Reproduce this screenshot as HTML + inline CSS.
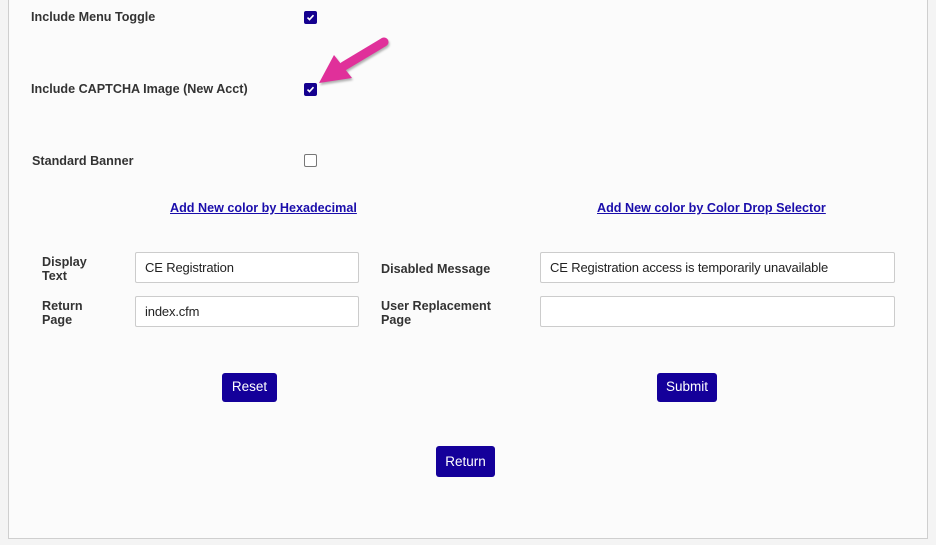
<html><head><style>
body{margin:0;width:936px;height:545px;background:#f4f4f4;font-family:"Liberation Sans",Arial,sans-serif;position:relative;overflow:hidden}
.box{position:absolute;left:8px;top:-2px;width:918px;height:539px;background:#fbfbfb;border:1px solid #cfcfcf}
.a{position:absolute;font-size:12.6px;font-weight:bold;color:#333;line-height:14px}
.cb{position:absolute;width:11px;height:11px;border-radius:2px;background:#14008f;border:1px solid #14008f}
.cb svg{position:absolute;left:1px;top:1px}
.cbo{position:absolute;width:11px;height:11px;border-radius:2px;background:#fff;border:1px solid #777}
.in{position:absolute;height:28px;border:1px solid #ccc;border-radius:2px;background:#fff;box-sizing:border-box;font-size:13px;letter-spacing:-0.15px;color:#222;padding:7px 9px}
.lk{position:absolute;font-size:12.6px;font-weight:bold;color:#1a0dab;text-decoration:underline}
.bt{position:absolute;height:29px;background:#14009a;color:#fff;border-radius:3px;font-size:13.5px;text-align:center;line-height:28px}
</style></head><body>
<div class="box"></div>
<div class="a" style="left:31px;top:10px">Include Menu Toggle</div>
<div class="cb" style="left:304px;top:11px"><svg width="9" height="9" viewBox="0 0 9 9"><path d="M1.5 4.6 L3.5 6.6 L7.5 2.2" stroke="#fff" stroke-width="1.6" fill="none"/></svg></div>
<div class="a" style="left:31px;top:82px">Include CAPTCHA Image (New Acct)</div>
<div class="cb" style="left:304px;top:83px"><svg width="9" height="9" viewBox="0 0 9 9"><path d="M1.5 4.6 L3.5 6.6 L7.5 2.2" stroke="#fff" stroke-width="1.6" fill="none"/></svg></div>
<div class="a" style="left:32px;top:154px">Standard Banner</div>
<div class="cbo" style="left:304px;top:154px"></div>
<svg style="position:absolute;left:300px;top:30px" width="100" height="70"><g style="filter:drop-shadow(1px 2px 1px rgba(0,0,0,.3))"><path d="M84 12 L44 36" stroke="#e0309a" stroke-width="9" stroke-linecap="round"/><path d="M19 53 L34 25 L52 48 Z" fill="#e0309a"/></g></svg>
<div class="lk" style="left:170px;top:201px">Add New color by Hexadecimal</div>
<div class="lk" style="left:597px;top:201px">Add New color by Color Drop Selector</div>
<div class="a" style="left:42px;top:255px">Display<br>Text</div>
<div class="in" style="left:135px;top:252px;width:224px;height:31px">CE Registration</div>
<div class="a" style="left:381px;top:262px">Disabled Message</div>
<div class="in" style="left:540px;top:252px;width:355px;height:31px">CE Registration access is temporarily unavailable</div>
<div class="a" style="left:42px;top:299px">Return<br>Page</div>
<div class="in" style="left:135px;top:296px;width:224px;height:31px">index.cfm</div>
<div class="a" style="left:381px;top:299px">User Replacement<br>Page</div>
<div class="in" style="left:540px;top:296px;width:355px;height:31px"></div>
<div class="bt" style="left:222px;top:373px;width:55px">Reset</div>
<div class="bt" style="left:657px;top:373px;width:60px">Submit</div>
<div class="bt" style="left:436px;top:446px;width:59px;height:31px;line-height:31px">Return</div>
</body></html>
